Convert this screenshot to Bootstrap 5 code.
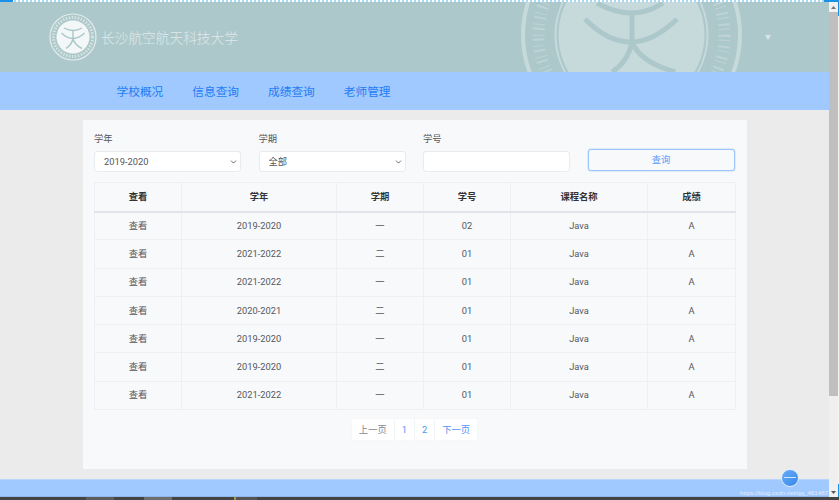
<!DOCTYPE html>
<html lang="zh-CN">
<head>
  <meta charset="UTF-8" />
  <title>成绩查询</title>
  <link href="https://cdn.jsdelivr.net/npm/bootstrap@5.3.0/dist/css/bootstrap.min.css" rel="stylesheet"/>
  <style>
    html, body { height: 500px; overflow: hidden; }
    body { background: #ebebeb; font-family: Roboto, "Noto Sans CJK SC", sans-serif; font-size: 9.3px; color: #55575c; }
    .shot-top { height: 2px; background: repeating-linear-gradient(90deg, #fff 0 2px, #a9d6f3 2px 4px); }
    .shot-top-left { width: 13px; background: #1a90e8; }
    .shot-top-right { width: 15px; background: #1a90e8; }
    .shot-main { height: 495px; }
    .shot-page { width: 829px; }
    .uni-header { height: 70px; background: #adc8ca; overflow: hidden; }
    .uni-seal { position: absolute; left: 510px; top: 0; }
    .uni-logo { margin-left: 49px; }
    .uni-name { font-family: "Noto Sans CJK SC", sans-serif; font-weight: 300; font-size: 13.7px; color: #dfe9ea; margin-left: 4px; }
    .uni-nav { height: 38px; background: #a0c9ff; padding-left: 116.5px; gap: 29px; }
    .uni-nav a { font-size: 11.7px; color: #1f7cf5; text-decoration: none; font-family: "Noto Sans CJK SC", sans-serif; }
    .uni-body { height: 369px; padding: 10px 0 10px 83px; }
    .uni-panel { width: 664px; height: 349px; background: #f8f9fb; padding: 12px 12px 0 11px; }
    .uni-filter { display: grid; grid-template-columns: repeat(4, 147px); column-gap: 17.5px; margin-bottom: 10px; }
    .uni-filter label { display: block; font-size: 9.3px; color: #55575c; line-height: 14px; margin-bottom: 5px; height: 14px; }
    .uni-filter .form-select, .uni-filter .form-control { height: 21px; min-height: 0; font-size: 9.3px; color: #55575c; border: 1px solid #e8ebf0; border-radius: 3px; padding: 0 14px 0 9px; background-color: #fff; }
    .uni-filter .form-select { background-size: 7px 6px; background-position: right 3px center; }
    .uni-filter .uni-query { height: 22px; width: 147px; margin-top: 17px; font-size: 9.3px; line-height: 1; padding: 0; color: #5a9bf5; background: #f8f9fb; border: 1px solid #9cc5fb; border-radius: 3px; box-shadow: 0 0 0 .5px #c5defc; }
    .uni-table { width: 641px; table-layout: fixed; margin: 0; --bs-table-bg: transparent; border-color: #edeff2; }
    .uni-table th, .uni-table td { font-size: 9.3px; text-align: center; vertical-align: middle; padding: 0; height: 28.3px; color: #55575c; border-color: #edeff2; }
    .uni-table th { font-weight: 700; color: #333; height: 29px; border-bottom: 2px solid #e1e4e8; }
    .uni-table col:nth-child(1) { width: 87px; }
    .uni-table col:nth-child(2) { width: 155px; }
    .uni-table col:nth-child(3) { width: 87px; }
    .uni-table col:nth-child(4) { width: 87px; }
    .uni-table col:nth-child(5) { width: 137px; }
    .uni-table col:nth-child(6) { width: 88px; }
    .uni-pager { margin: 9px 0 0; gap: 1px; --bs-pagination-border-width: 0; --bs-pagination-border-radius: 0; }
    .uni-pager .page-item .page-link { font-size: 9.3px; height: 21px; line-height: 21px; padding: 0 7px; margin-left: 0; color: #4f94f5; background: #fff; border: 0; box-shadow: 0 0 1px #e8ebf0; }
    .uni-pager .page-item.disabled .page-link { color: #85878c; background: #fff; }
    .uni-foot { height: 18px; background: #a0c9ff; border-top: 1px solid #b7d5fd; border-bottom: 1px solid #8fb7e8; }
    .shot-bar { width: 10px; background: #f4f4f4; position: relative; padding-right: 1px; }
    .shot-bar::before, .shot-bar::after { content: ""; position: absolute; right: 0; width: 1px; background: #1a90e8; }
    .shot-bar::before { top: 0; height: 14px; }
    .shot-bar::after { bottom: 0; height: 13px; }
    .shot-bar-btn { height: 10px; background: #f1f1f1; display: flex; align-items: center; justify-content: center; }
    .shot-thumb { height: 384px; background: #bfbfbf; }
    .shot-track { background: #efefef; }
    .shot-task { height: 3px; background: linear-gradient(90deg, #444 86px, #5c5c5c 86px 114px, #444 114px 144px, #6e6e6e 144px 172px, #444 172px 234px, #a8983c 234px 236px, #555 236px 257px, #444 257px); }
    .to-top { position: absolute; left: 781px; top: 469px; width: 18px; height: 18px; border-radius: 50%; border: 1.5px solid #e3eefc; background: linear-gradient(135deg, #64aef7, #3a86ea); }
    .to-top::after { content: ""; position: absolute; left: 2px; right: 2px; top: 7px; height: 1px; background: #cfe3fb; }
    .csdn-mark { position: absolute; left: 740px; top: 487px; font-family: "Liberation Sans", sans-serif; font-size: 6.2px; line-height: 11px; color: rgba(255,255,255,.7); white-space: nowrap; }
  </style>
</head>
<body>
  <div class="shot-top d-flex justify-content-between">
    <div class="shot-top-left"></div>
    <div class="shot-top-right"></div>
  </div>

  <div class="shot-main d-flex">
    <div class="shot-page d-flex flex-column">
      <header class="uni-header position-relative d-flex align-items-center">
        <svg class="uni-seal" width="270" height="70" viewBox="0 0 270 70">
          <circle cx="121.500" cy="33" r="108.500" fill="none" stroke="#c6d9db" stroke-width="4"/>
          <circle cx="121.500" cy="33" r="93" fill="none" stroke="#bdd3d5" stroke-width="12" stroke-dasharray="2 3 1 5"/>
          <circle cx="121.500" cy="33" r="76" fill="none" stroke="#c6d9db" stroke-width="2"/>
          <circle cx="121.500" cy="33" r="73" fill="#c6d9db"/>
          <path d="M87 1Q123 21 153 1M75 17Q120 63 167 17M122 10V40M122 40Q118 60 102 70M122 40Q130 60 165 70" fill="none" stroke="#adc8ca" stroke-width="5"/>
          <path d="M255 33h6l-3 5z" fill="#d7e5e6"/>
        </svg>
        <svg class="uni-logo" width="48" height="48" viewBox="0 0 48 48">
          <circle cx="24" cy="24" r="23" fill="none" stroke="#e3eced" stroke-width="1.200"/>
          <circle cx="24" cy="24" r="19.500" fill="none" stroke="#d5e3e4" stroke-width="3" stroke-dasharray="1.500 1.500"/>
          <circle cx="24" cy="24" r="16.500" fill="#f3f7f7"/>
          <path d="M15 15Q24 20 33 15M12.500 20Q24 31 35.500 20M24 17V26Q22.500 32 17 35.500M24 26Q26 32 33 35.500" fill="none" stroke="#a9c6c8" stroke-width="1.400"/>
        </svg>
        <span class="uni-name">长沙航空航天科技大学</span>
      </header>

      <nav class="uni-nav d-flex align-items-center">
        <a href="#">学校概况</a>
        <a href="#">信息查询</a>
        <a href="#">成绩查询</a>
        <a href="#">老师管理</a>
      </nav>

      <main class="uni-body">
        <div class="uni-panel">
          <form class="uni-filter">
            <div>
              <label for="year">学年</label>
              <select id="year" class="form-select"><option>2019-2020</option></select>
            </div>
            <div>
              <label for="term">学期</label>
              <select id="term" class="form-select"><option>全部</option></select>
            </div>
            <div>
              <label for="sno">学号</label>
              <input id="sno" type="text" class="form-control" />
            </div>
            <button type="button" class="btn uni-query">查询</button>
          </form>

          <table class="table table-bordered uni-table">
            <colgroup><col><col><col><col><col><col></colgroup>
            <thead>
              <tr><th>查看</th><th>学年</th><th>学期</th><th>学号</th><th>课程名称</th><th>成绩</th></tr>
            </thead>
            <tbody>
              <tr><td>查看</td><td>2019-2020</td><td>一</td><td>02</td><td>Java</td><td>A</td></tr>
              <tr><td>查看</td><td>2021-2022</td><td>二</td><td>01</td><td>Java</td><td>A</td></tr>
              <tr><td>查看</td><td>2021-2022</td><td>一</td><td>01</td><td>Java</td><td>A</td></tr>
              <tr><td>查看</td><td>2020-2021</td><td>二</td><td>01</td><td>Java</td><td>A</td></tr>
              <tr><td>查看</td><td>2019-2020</td><td>一</td><td>01</td><td>Java</td><td>A</td></tr>
              <tr><td>查看</td><td>2019-2020</td><td>二</td><td>01</td><td>Java</td><td>A</td></tr>
              <tr><td>查看</td><td>2021-2022</td><td>一</td><td>01</td><td>Java</td><td>A</td></tr>
            </tbody>
          </table>

          <ul class="pagination uni-pager justify-content-center">
            <li class="page-item disabled"><a class="page-link" href="#">上一页</a></li>
            <li class="page-item"><a class="page-link" href="#">1</a></li>
            <li class="page-item"><a class="page-link" href="#">2</a></li>
            <li class="page-item"><a class="page-link" href="#">下一页</a></li>
          </ul>
        </div>
      </main>

      <footer class="uni-foot"></footer>
    </div>

    <div class="shot-bar d-flex flex-column">
      <div class="shot-bar-btn">
        <svg width="5" height="3" viewBox="0 0 5 3"><path d="M0 3L2.500 0L5 3z" fill="#777"/></svg>
      </div>
      <div class="shot-thumb"></div>
      <div class="shot-track flex-grow-1"></div>
      <div class="shot-bar-btn">
        <svg width="5" height="3" viewBox="0 0 5 3"><path d="M0 0L2.500 3L5 0z" fill="#555"/></svg>
      </div>
    </div>
  </div>

  <div class="shot-task"></div>

  <div class="to-top"></div>
  <div class="csdn-mark">https://blog.csdn.net/qq_461487</div>

  <script src="https://cdn.jsdelivr.net/npm/bootstrap@5.3.0/dist/js/bootstrap.bundle.min.js"></script>
</body>
</html>
